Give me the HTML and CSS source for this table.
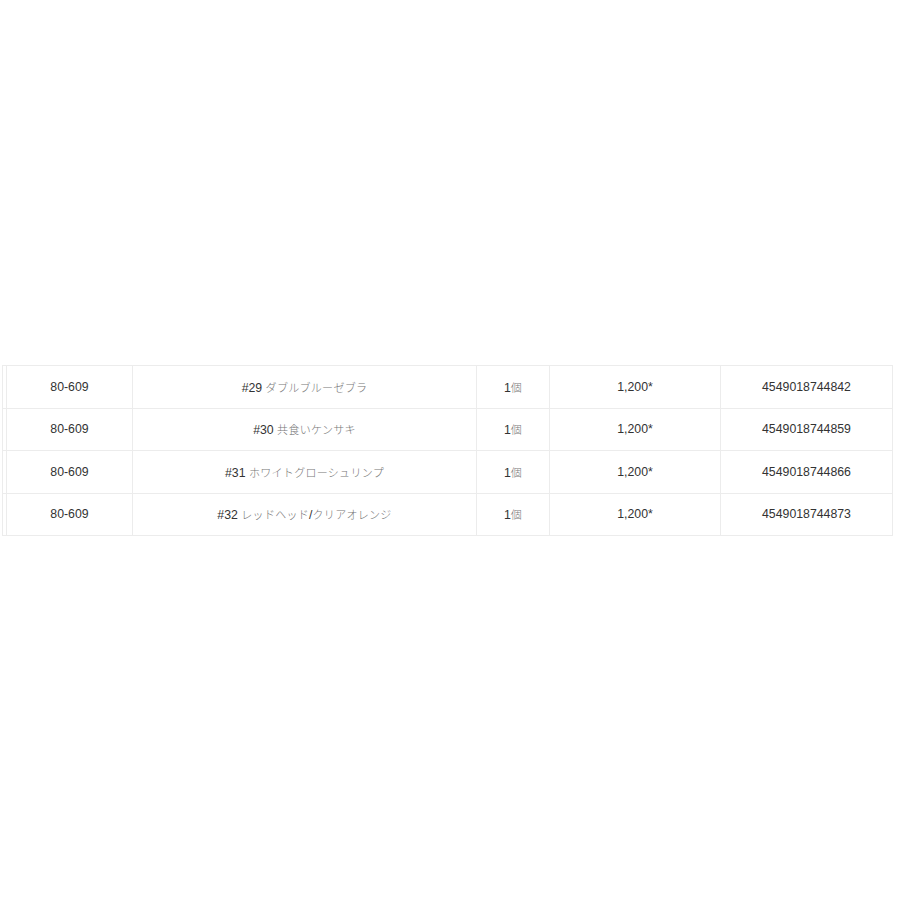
FILE: index.html
```html
<!DOCTYPE html>
<html lang="ja">
<head>
<meta charset="utf-8">
<link rel="stylesheet" href="styles.css">
</head>
<body>
<div class="wrap">
<table class="spec">
  <colgroup>
    <col class="c0"><col class="c1"><col class="c2"><col class="c3"><col class="c4"><col class="c5">
  </colgroup>
  <tbody>
    <tr><td></td><td>80-609</td><td>#29 <span class="jp">ダブルブルーゼブラ</span></td><td>1<span class="jp">個</span></td><td>1,200*</td><td>4549018744842</td></tr>
    <tr><td></td><td>80-609</td><td>#30 <span class="jp">共食いケンサキ</span></td><td>1<span class="jp">個</span></td><td>1,200*</td><td>4549018744859</td></tr>
    <tr><td></td><td>80-609</td><td>#31 <span class="jp">ホワイトグローシュリンプ</span></td><td>1<span class="jp">個</span></td><td>1,200*</td><td>4549018744866</td></tr>
    <tr><td></td><td>80-609</td><td>#32 <span class="jp">レッドヘッド</span>/<span class="jp">クリアオレンジ</span></td><td>1<span class="jp">個</span></td><td>1,200*</td><td>4549018744873</td></tr>
  </tbody>
</table>
</div>
</body>
</html>
```
FILE: styles.css
```css
html, body {
  margin: 0;
  padding: 0;
  background: #ffffff;
}
.wrap {
  padding: 365px 0 0 2px;
}
.spec {
  border-collapse: collapse;
  table-layout: fixed;
  width: 891px;
  font-family: "Liberation Sans", "Noto Sans CJK JP", sans-serif;
  font-size: 12.3px;
  color: #333333;
}
.c0 { width: 4px; }
.c1 { width: 126px; }
.c2 { width: 344px; }
.c3 { width: 73px; }
.c4 { width: 171px; }
.c5 { width: 172px; }
.spec td {
  border: 1px solid #ececec;
  height: 41.5px;
  padding: 0;
  text-align: center;
  vertical-align: middle;
  white-space: nowrap;
}
.jp {
  font-family: "Noto Sans CJK JP", sans-serif;
  font-size: 11px;
  letter-spacing: 0.3px;
  color: #777777;
  font-weight: 300;
}
```
